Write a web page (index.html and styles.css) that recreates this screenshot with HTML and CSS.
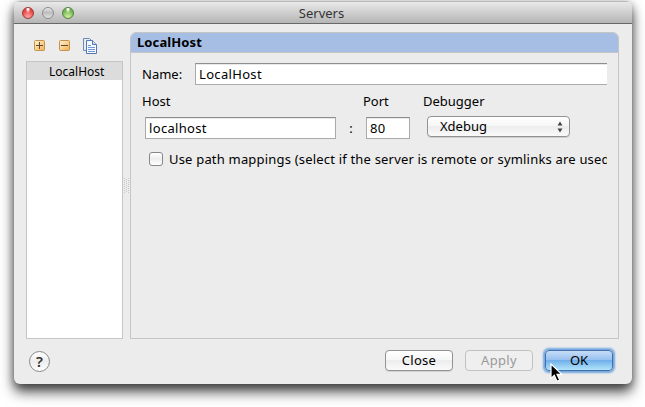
FILE: index.html
```html
<!DOCTYPE html>
<html lang="en">
<head>
<meta charset="utf-8">
<title>Servers</title>
<link rel="stylesheet" href="styles.css">
</head>
<body>
<div class="window">
  <header class="titlebar">
    <div class="lights"><i class="light red"></i><i class="light gray"></i><i class="light green"></i></div>
    <span class="title">Servers</span>
  </header>
  <main class="content">
    <aside class="sidebar">
      <div class="toolbar">
        <svg width="11" height="11" viewBox="0 0 11 11"><defs><linearGradient id="gold" x1="0" y1="0" x2="1" y2="1"><stop offset="0" stop-color="#fff3d4"/><stop offset="1" stop-color="#f3b04d"/></linearGradient></defs><rect x=".5" y=".5" width="10" height="10" rx="1" fill="url(#gold)" stroke="#c3924d"/><path d="M2 5.5h7M5.500 2v7" stroke="#5f4a35"/></svg>
        <svg width="11" height="11" viewBox="0 0 11 11"><rect x=".5" y=".5" width="10" height="10" rx="1" fill="url(#gold)" stroke="#c3924d"/><path d="M2 5.5h7" stroke="#5f4a35"/></svg>
        <svg width="14" height="16" viewBox="0 0 14 16"><path d="M.5.5h6l2 2v10h-8z" fill="#e5edf7" stroke="#7089b5"/><path d="M3.500 2.500h6l4 4v9h-10z" fill="#f4f8ff" stroke="#5877ad"/><path d="M9.500 2.500v4h4" fill="#cadcf5" stroke="#5877ad"/><path d="M5 7.500h3M5 9.500h7M5 11.500h7M5 13.500h7" stroke="#7198df"/></svg>
      </div>
      <div class="list"><div class="list-row">LocalHost</div></div>
    </aside>
    <div class="splitter"><svg width="5" height="15" viewBox="0 0 5 15"><path d="M.5 0v15M2.500 1v14M4.500 0v15" stroke="#c8c8c8" stroke-dasharray="1 1"/></svg></div>
    <section class="panel">
      <h1>LocalHost</h1>
      <div class="form">
        <div class="name-row"><label>Name:</label><div class="field name-field"><span>LocalHost</span></div></div>
        <div class="labels"><span>Host</span><span>Port</span><span>Debugger</span></div>
        <div class="server-row"><div class="field host-field"><span>localhost</span></div><span class="colon">:</span><div class="field port-field">80</div>
          <div class="select"><span>Xdebug</span><svg width="6" height="12" viewBox="0 0 6 12"><path d="M3 .5l2.500 4H.5zM3 11.500L.5 7.500h5z" fill="#444"/></svg></div></div>
        <div class="check-row"><i class="checkbox"></i><span>Use path mappings (select if the server is remote or symlinks are used)</span></div>
      </div>
    </section>
  </main>
  <footer class="footer">
    <div class="help">?</div>
    <div class="buttons"><div class="button">Close</div><div class="button disabled">Apply</div><div class="button primary">OK</div></div>
  </footer>
</div>
<svg class="cursor" width="14" height="20" viewBox="0 0 14 20"><path d="M1 1v14.500l3.300-3.200 2.700 6 2.700-1.200-2.700-5.700h4.800z" fill="#000" stroke="#fff" stroke-width="1.200"/></svg>
</body>
</html>
```
FILE: styles.css
```css
* { box-sizing: border-box; }
html { background: #fff; overflow: hidden; }
body { margin: 0; padding: 1px 0 0 14px; width: 645px; height: 407px; overflow: hidden; font: 13px/18px "Noto Sans", "Open Sans", sans-serif; color: #000; }
svg { display: block; flex: none; }
span { white-space: nowrap; }
.window { width: 618px; height: 383px; border-radius: 6px; background: #ececec; box-shadow: 0 8px 13px rgba(0,0,0,.68), 0 2px 9px rgba(0,0,0,.35); overflow: hidden; }
.titlebar { height: 23px; display: grid; grid-template-columns: 70px 1fr 82px; background: linear-gradient(#b9b9b9 0 1px, #e9e9e9 1px, #b5b5b5); border-bottom: 1px solid #686868; }
.lights { display: flex; gap: 8px; padding: 6px 0 0 8px; }
.light { width: 12px; height: 12px; border-radius: 50%; border: 1px solid #888; }
.red { background: radial-gradient(ellipse at 50% 10%, #fff 0 8%, transparent 32%), radial-gradient(circle at 50% 90%, #ffaba3, #e94646 65%); border-color: #9e3535; }
.gray { background: linear-gradient(#e8e8e8, #bdbdbd 45%, #e2e2e2); border-color: #8d8d8d; }
.green { background: radial-gradient(ellipse at 50% 10%, #fff 0 8%, transparent 32%), radial-gradient(circle at 50% 90%, #d0f5a0, #74b452 65%); border-color: #54813d; }
.title { justify-self: center; line-height: 24px; color: #333; margin-left: 9px; }
.content { display: flex; height: 315px; padding: 8px 13px 0 12px; }
.sidebar { width: 97px; }
.toolbar { display: flex; height: 29px; padding: 8px 0 0 8px; gap: 14px; }
.toolbar svg:last-child { margin: -2px 0 0 -1px; }
.list { height: 278px; background: #fff; border: 1px solid #c5c5c5; }
.list-row { height: 18px; padding-left: 22px; background: #dcdcdc; font-size: 12px; line-height: 19px; }
.splitter { width: 7px; padding: 146px 0 0 1px; }
.panel { width: 489px; height: 307px; border: 1px solid #c5c5c5; border-radius: 6px 6px 0 0; overflow: hidden; }
h1 { margin: 0; height: 20px; padding-left: 6px; background: #a6bde4; border-bottom: 1px solid #c5c5c5; font-size: 13px; line-height: 19px; letter-spacing: .1px; }
.form { margin: 10px 11px 0; overflow: hidden; }
.name-row { display: flex; line-height: 23px; }
.name-row label { width: 53px; }
.field { height: 22px; padding-left: 3px; line-height: 20px; background: #fff; border: 1px solid #aaa; border-top-color: #8e8e8e; box-shadow: inset 0 1px #e9e9e9; }
.name-field { flex: 1; border-right: 0; }
.name-field, .host-field { letter-spacing: .33px; }
.labels { display: grid; grid-template-columns: 221px 60px 1fr; margin-top: 6px; line-height: 19px; }
.server-row { display: flex; margin-top: 6px; padding-left: 3px; }
.host-field { width: 191px; }
.colon { width: 30px; text-align: center; line-height: 23px; }
.port-field { width: 44px; letter-spacing: .3px; }
.select { display: flex; justify-content: space-between; width: 143px; height: 21px; margin: -1px 0 0 17px; padding: 0 6px 0 12px; line-height: 19px; border: 1px solid #929292; border-radius: 4px; background: linear-gradient(#fff, #f6f6f6 48%, #ededed 50%, #fafafa); box-shadow: 0 1px rgba(0,0,0,.12); }
.select svg { margin-top: 4px; }
.check-row { display: flex; margin: 10px 0 0 7px; line-height: 18px; letter-spacing: .19px; }
.checkbox { flex: none; width: 14px; height: 14px; margin: 2px 6px 0 0; border: 1px solid #888; border-radius: 3px; background: linear-gradient(#fff, #eee 50%, #fff); }
.footer { display: flex; justify-content: space-between; padding: 11px 19px 0 15px; }
.help { width: 21px; height: 21px; margin-top: 1px; text-align: center; font-weight: 600; font-size: 15px; line-height: 19px; border: 1px solid #888; border-radius: 50%; background: linear-gradient(#fff, #ededed 50%, #fff); color: #333; }
.buttons { display: flex; gap: 12px; }
.button { width: 68px; height: 21px; text-align: center; line-height: 19px; letter-spacing: .3px; border: 1px solid #929292; border-radius: 4px; background: linear-gradient(#fff, #f6f6f6 48%, #ededed 50%, #fafafa); box-shadow: 0 1px rgba(0,0,0,.1); }
.disabled { color: #999; border-color: #c1c1c1; background: #efefef; box-shadow: none; }
.primary { letter-spacing: 0; border-color: #426fae; background: linear-gradient(#c7dcf6, #94c0ef 48%, #70afe9 50%, #b2e4fc); box-shadow: 0 0 2px 2px #72a7df; }
.cursor { position: absolute; left: 550px; top: 363px; }
```
